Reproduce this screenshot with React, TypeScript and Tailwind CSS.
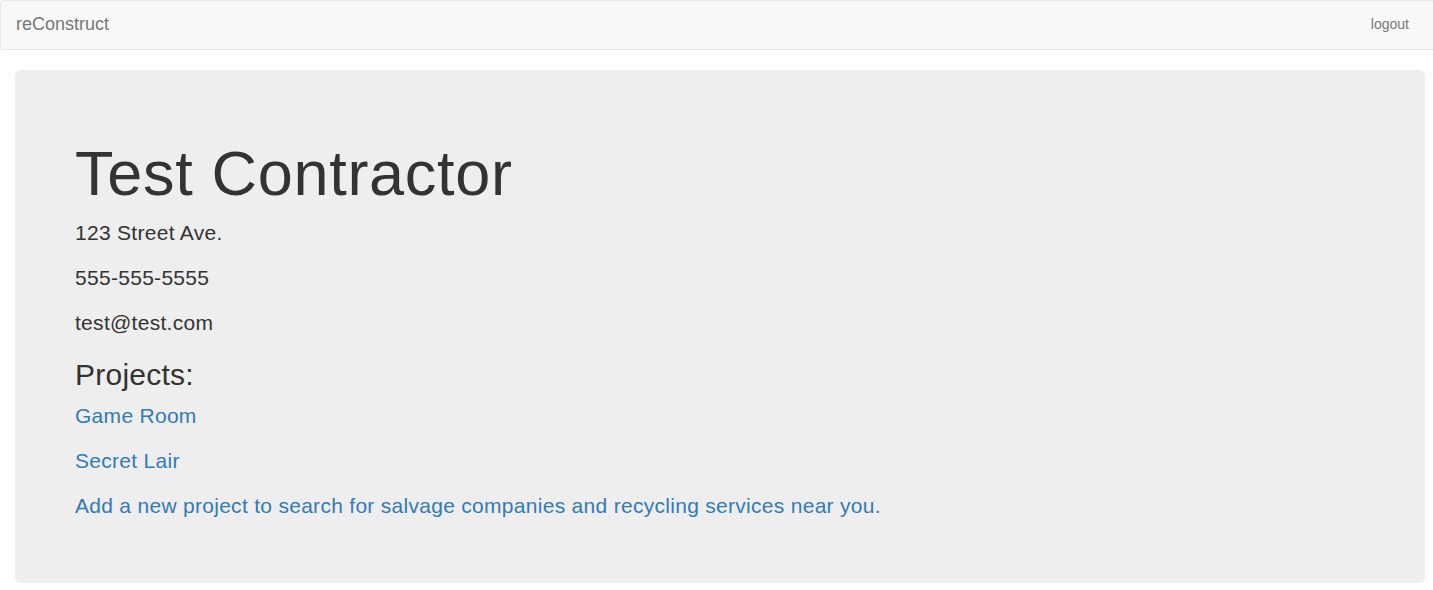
const projects = ["Game Room", "Secret Lair"];

export default function App() {
  return (
    <div className="min-h-[590px] bg-white text-[14px] text-[#333] font-['Liberation_Sans',Arial,sans-serif] overflow-hidden">
      <nav className="flex h-[50px] items-center justify-between rounded-l-[4px] border border-r-0 border-[#e7e7e7] bg-[#f8f8f8]">
        <a className="pl-[15px] pb-[2px] text-[18px] leading-[20px] text-[#777]">reConstruct</a>
        <a className="pr-[24px] pb-[2px] text-[14px] leading-[20px] text-[#777]">logout</a>
      </nav>

      <div className="ml-[15px] mt-[20px] w-[1410px] rounded-[6px] bg-[#eee] px-[60px] pt-[49px] pb-[47px]">
        <h1 className="mt-[20px] mb-[10px] text-[63px] leading-[1.1] font-normal tracking-[0.7px]">Test Contractor</h1>
        <div className="text-[21px] leading-[30px] tracking-[0.29px]">
          <p className="mb-[15px]">123 Street Ave.</p>
          <p className="mb-[15px]">555-555-5555</p>
          <p>test@test.com</p>
        </div>
        <h2 className="mt-[20px] mb-[10px] text-[30px] leading-[33px] font-normal tracking-[0.25px]">Projects:</h2>
        <div className="text-[21px] leading-[30px] tracking-[0.29px]">
          {projects.map((name) => (
            <p key={name} className="mb-[15px]">
              <a className="text-[#337ab7]">{name}</a>
            </p>
          ))}
          <p className="mb-[15px]">
            <a className="text-[#337ab7]">
              Add a new project to search for salvage companies and recycling services near you.
            </a>
          </p>
        </div>
      </div>
    </div>
  );
}
